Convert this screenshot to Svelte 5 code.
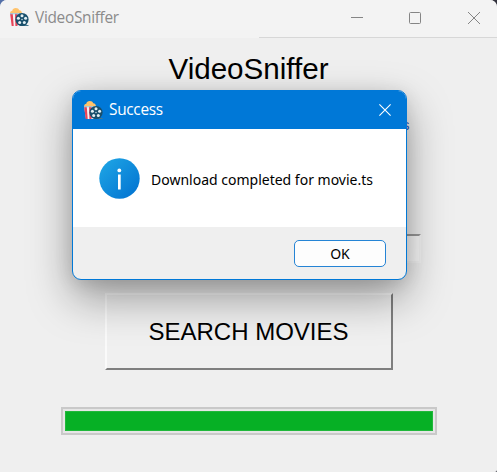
<script>
  let title = 'VideoSniffer';
  let message = 'Download completed for movie.ts';
  let progress = 100;
</script>

{#snippet movieIcon()}
  <svg class="movie" width="20" height="20" viewBox="0 0 20 20">
    <path d="M1 6h12l-1.5 13H3z" fill="#f4f1f3" />
    <path d="M1 6h2.7l1 13H2.7zM6 6h2.5v13H6.4z" fill="#e84357" />
    <path d="M1 6.6C1 4.8 2 4 3.3 3.8 3.5 1.8 5 1 6.7 1c2 0 3 .9 3.5 2.3C12 3.2 13 4.7 13 6.6z" fill="#ffc36c" />
    <path d="M1 6.2h12v1.1H1z" fill="#94cfeb" />
    <path d="M11 18h8.5v1H11z" fill="#47788f" />
    <circle cx="13" cy="12.5" r="6.6" fill="#194f6b" />
    <g fill="#e3f0f4">
      <circle cx="13" cy="8.7" r="1.5" />
      <circle cx="16.6" cy="11.3" r="1.5" />
      <circle cx="15.3" cy="15.6" r="1.5" />
      <circle cx="10.7" cy="15.6" r="1.5" />
      <circle cx="9.4" cy="11.3" r="1.5" />
      <circle cx="13" cy="12.5" r=".7" />
    </g>
  </svg>
{/snippet}

<div class="desktop">
  <div class="window">
    <header class="titlebar">
      {@render movieIcon()}
      <span class="caption">{title}</span>
      <svg class="controls" width="140" height="36" viewBox="0 0 140 36" fill="none" stroke="#858585">
        <path d="M9 17.5h12" />
        <rect x="67.5" y="12.5" width="11" height="11" rx="1" />
        <path d="M126 12l12 12M138 12l-12 12" />
      </svg>
    </header>
    <main>
      <h1>{title}</h1>
      <div class="link">s</div>
      <div class="entry"></div>
      <button class="search">SEARCH MOVIES</button>
      <div class="progress"><div class="bar" style="width: {progress}%"></div></div>
    </main>
  </div>

  <div class="dialog">
    <header class="dialog-title">
      {@render movieIcon()}
      <span>Success</span>
      <svg class="close" width="12" height="12" viewBox="0 0 12 12" fill="none" stroke="#fff" stroke-width="1.1">
        <path d="M.4 .4l11.2 11.2M11.6 .4L.4 11.6" />
      </svg>
    </header>
    <div class="body">
      <svg class="info" width="41" height="41" viewBox="0 0 41 41">
        <defs>
          <linearGradient id="blue" x1="0" y1="0" x2="1" y2="1">
            <stop offset="0" stop-color="#20a8e6" />
            <stop offset="1" stop-color="#0070d0" />
          </linearGradient>
        </defs>
        <circle cx="20.5" cy="20.5" r="20.2" fill="url(#blue)" />
        <circle cx="20.3" cy="12.4" r="1.9" fill="#fff" />
        <path d="M19 16.6h2.7v15H19z" fill="#fff" />
      </svg>
      <span class="message">{message}</span>
    </div>
    <footer><button class="ok">OK</button></footer>
  </div>
</div>

<style>
  :global(body) { margin: 0; overflow: hidden; }
  * { box-sizing: border-box; }
  .desktop {
    position: relative;
    width: 497px;
    height: 472px;
    overflow: hidden;
    background: linear-gradient(90deg, #5470a8 0 50%, #33333d 50%);
  }
  .window {
    height: 472px;
    border-radius: 7px 7px 2px 0;
    overflow: hidden;
    background: #efefef;
    display: flex;
    flex-direction: column;
  }
  .movie { display: block; flex: none; }
  .titlebar {
    height: 38px;
    flex: none;
    display: flex;
    align-items: flex-start;
    padding: 0 15px 0 9px;
    background: linear-gradient(#d7d7d7, #d7d7d7) 259px 37px / 238px 1px no-repeat, #f3f3f3;
  }
  .titlebar .movie { margin-top: 7px; }
  .caption {
    margin-left: 6px;
    font: 15.4px/36px "Open Sans", sans-serif;
    letter-spacing: -.3px;
    color: #8b8b8b;
  }
  .controls { margin-left: auto; }
  main {
    flex: 1;
    display: flex;
    flex-direction: column;
    align-items: center;
  }
  h1 {
    margin: 14px 0 0;
    height: 34px;
    font: 400 29.6px/34px "Liberation Sans", Arial, sans-serif;
    color: #000;
  }
  .link {
    margin-top: 29px;
    width: 322px;
    height: 20px;
    text-align: right;
    font: 15px/20px "Liberation Sans", Arial, sans-serif;
    color: #2b5cc4;
  }
  .entry {
    margin-top: 99px;
    width: 344px;
    height: 29px;
    border: 2px solid #f4f4f4;
    border-top: 2px solid #9a9a9a;
    background: #fafafa;
  }
  .search {
    margin-top: 30px;
    width: 288px;
    height: 77px;
    padding: 0;
    border: 2px solid;
    border-color: #fafafa #7f7f7f #7f7f7f #fafafa;
    background: #f0f0f0;
    font: 24px/1 "Liberation Sans", Arial, sans-serif;
    color: #000;
  }
  .progress {
    margin-top: 37px;
    width: 376px;
    height: 28px;
    padding: 2px;
    border: 2px solid #c9c9c9;
    background: #e6e6e6;
  }
  .bar { height: 100%; background: #06b025; border: 1px solid #20b83b; }
  .dialog {
    position: absolute;
    left: 72px;
    top: 90px;
    width: 335px;
    height: 190px;
    border: 1px solid #0078d7;
    border-radius: 9px;
    overflow: hidden;
    background: #efefef;
    box-shadow: 0 18px 44px rgba(0, 0, 0, .37), 0 3px 18px rgba(0, 0, 0, .1);
    display: flex;
    flex-direction: column;
  }
  .dialog-title {
    height: 38px;
    display: flex;
    align-items: center;
    padding: 0 15px 0 10px;
    background: #0078d7;
    color: #fff;
    font: 15.4px/38px "Open Sans", sans-serif;
    letter-spacing: -.3px;
  }
  .dialog-title span { margin-left: 6px; }
  .close { margin-left: auto; }
  .body {
    height: 98px;
    display: flex;
    align-items: center;
    padding-left: 26px;
    background: #fff;
  }
  .message {
    margin: 4px 0 0 11px;
    white-space: nowrap;
    font: 14px/20px "Noto Sans", sans-serif;
    color: #000;
  }
  footer {
    display: flex;
    justify-content: flex-end;
    padding: 13px 20px 0 0;
  }
  .ok {
    width: 92px;
    height: 27px;
    padding: 0;
    border: 1.5px solid #2584d5;
    border-radius: 5px;
    background: #fdfdfd;
    font: 14px/20px "Noto Sans", sans-serif;
    color: #000;
  }
</style>
